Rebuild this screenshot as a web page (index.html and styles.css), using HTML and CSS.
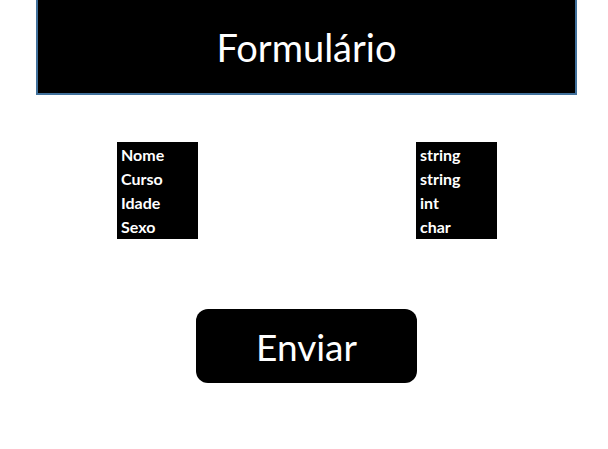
FILE: index.html
```html
<!DOCTYPE html>
<html>
<head>
    <title>Formulário</title>
    <link rel="stylesheet" href="styles.css">
</head>
<body>
    <div class="page">
        <header class="title-bar">
            <h1>Formulário</h1>
        </header>

        <div class="fields">
            <div class="field-box">
                <span>Nome</span>
                <span>Curso</span>
                <span>Idade</span>
                <span>Sexo</span>
            </div>
            <div class="field-box">
                <span>string</span>
                <span>string</span>
                <span>int</span>
                <span>char</span>
            </div>
        </div>

        <button type="button" class="btn">Enviar</button>
    </div>
</body>
</html>
```

FILE: styles.css
```css
* {
    margin: 0;
    padding: 0;
    box-sizing: border-box;
    font-family: Lato, "Open Sans", "Liberation Sans", sans-serif;
}

body {
    background: #fff;
}

.page {
    display: flex;
    flex-direction: column;
    align-items: flex-start;
}

.title-bar {
    margin-left: 36px;
    width: 541px;
    height: 95px;
    background: #000;
    border: 2px solid #41719c;
    border-top: none;
    display: flex;
    justify-content: center;
    align-items: center;
}

.title-bar h1 {
    color: #fff;
    font-size: 38px;
    font-weight: 400;
    margin-top: 1px;
}

.fields {
    display: flex;
    gap: 218px;
    margin-top: 47px;
    margin-left: 117px;
}

.field-box {
    width: 81px;
    height: 97px;
    background: #000;
    padding: 1px 4px 0;
    display: flex;
    flex-direction: column;
}

.field-box span {
    color: #fff;
    font-size: 16px;
    font-weight: 700;
    line-height: 24px;
}

.btn {
    margin-top: 70px;
    margin-left: 196px;
    width: 221px;
    height: 74px;
    background: #000;
    color: #fff;
    border: none;
    border-radius: 12px;
    font-size: 37px;
    font-weight: 400;
}
```
